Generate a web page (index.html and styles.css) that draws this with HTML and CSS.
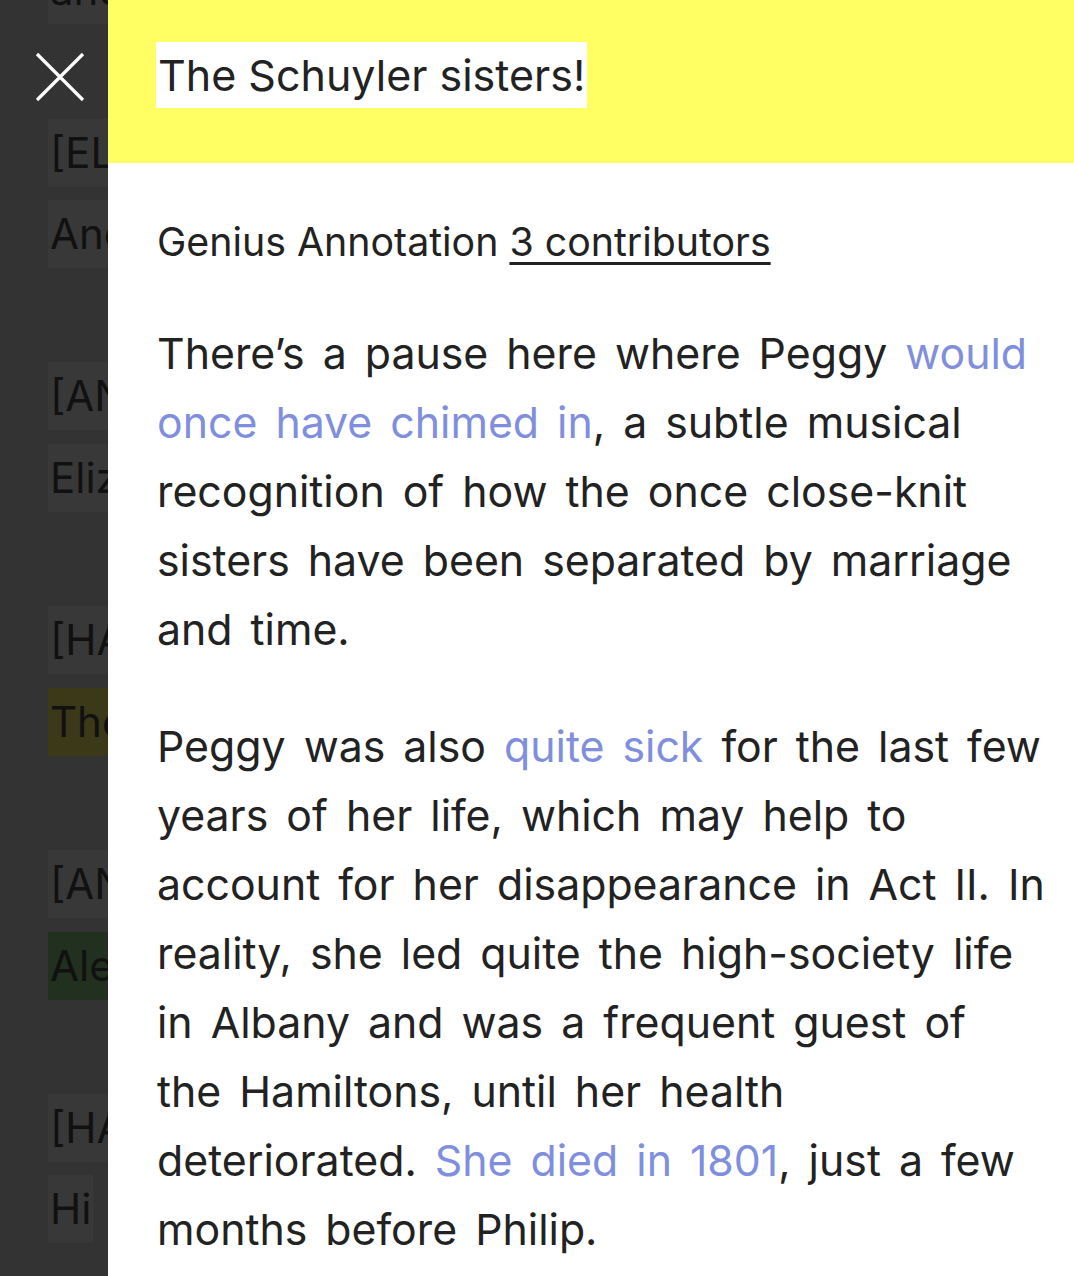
FILE: index.html
```html
<!DOCTYPE html>
<html lang="en">
<head>
<meta charset="utf-8">
<title>The Schuyler sisters! – Genius Annotation</title>
<link rel="stylesheet" href="styles.css">
</head>
<body>
<div class="page">
  <div class="lyrics">
    <div class="line top"><span class="box">and</span></div>
    <div class="line blank"></div>
    <div class="line"><span class="box">[ELIZA]</span></div>
    <div class="line"><span class="box">And</span></div>
    <div class="line blank"></div>
    <div class="line"><span class="box">[ANGELICA]</span></div>
    <div class="line"><span class="box">Eliza</span></div>
    <div class="line blank"></div>
    <div class="line"><span class="box">[HAMILTON]</span></div>
    <div class="line"><span class="box active">The</span></div>
    <div class="line blank"></div>
    <div class="line"><span class="box">[ANGELICA]</span></div>
    <div class="line"><span class="box green">Alexander</span></div>
    <div class="line blank"></div>
    <div class="line"><span class="box">[HAMILTON]</span></div>
    <div class="line"><span class="box">Hi</span></div>
  </div>
  <button class="close" aria-label="Close">
    <svg width="50" height="50" viewBox="0 0 50 50"><path d="M2 2 L48 48 M48 2 L2 48" stroke="#fff" stroke-width="3.2" fill="none"/></svg>
  </button>
  <aside class="panel">
    <header class="panel-head">
      <span class="fragment">The Schuyler sisters!</span>
    </header>
    <div class="panel-body">
      <div class="meta">Genius Annotation <a class="contrib" href="#">3 contributors</a></div>
      <p>There’s a pause here where Peggy <a href="#">would once have chimed in</a>, a subtle musical recognition of how the once close-knit sisters have been separated by marriage and time.</p>
      <p>Peggy was also <a href="#">quite sick</a> for the last few years of her life, which may help to account for her disappearance in Act II. In reality, she led quite the high-society life in Albany and was a frequent guest of the Hamiltons, until her health deteriorated. <a href="#">She died in 1801</a>, just a few months before Philip.</p>
    </div>
  </aside>
</div>
</body>
</html>
```

FILE: styles.css
```css
* { box-sizing: border-box; }
html, body { margin: 0; padding: 0; }
body {
  width: 1074px;
  height: 1276px;
  overflow: hidden;
  background: #333333;
  font-family: Inter, "Noto Sans", sans-serif;
}
.page {
  position: relative;
  display: flex;
  width: 1074px;
  height: 1276px;
}
.lyrics {
  width: 108px;
  flex: none;
  overflow: hidden;
  padding-left: 48px;
  margin-top: -44px;
}
.line {
  height: 81.3px;
  white-space: nowrap;
}
.box {
  display: inline-block;
  height: 68px;
  line-height: 68px;
  padding: 0 2px;
  font-size: 42px;
  color: #111;
  background: #383838;
}
.box.active { background: #3b3918; }
.box.green { background: #21301f; }
.close {
  position: absolute;
  left: 35px;
  top: 52px;
  width: 50px;
  height: 50px;
  padding: 0;
  border: 0;
  background: none;
}
.close svg { display: block; }
.panel {
  flex: 1;
  background: #fff;
  height: 1276px;
}
.panel-head {
  height: 163px;
  background: #ffff64;
  padding: 42px 0 0 48px;
}
.fragment {
  display: inline-block;
  background: #fff;
  color: #222;
  font-size: 43px;
  height: 66px;
  line-height: 66px;
  padding: 0 2px;
}
.panel-body {
  padding: 55px 27px 0 49px;
  color: #222;
}
.meta {
  font-size: 39.3px;
  line-height: 48px;
  margin-bottom: 53px;
}
.contrib {
  color: #222;
  text-decoration: underline;
  text-decoration-thickness: 3px;
  text-underline-offset: 6px;
}
.panel-body p {
  margin: 0 0 48px;
  font-size: 42.8px;
  word-spacing: 6px;
  line-height: 69px;
}
.panel-body p a {
  color: #7f8fdd;
  text-decoration: none;
}
```
